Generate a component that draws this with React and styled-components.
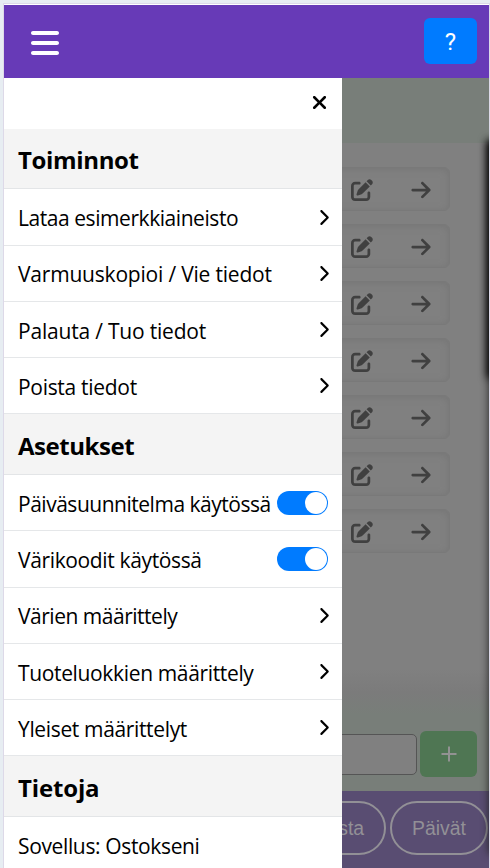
import React from "react";
import styled, { createGlobalStyle } from "styled-components";
import { FaBars, FaXmark, FaChevronRight, FaPenToSquare, FaArrowRight } from "react-icons/fa6";

const GlobalStyle = createGlobalStyle`
  * { box-sizing: border-box; }
  body { margin: 0; background: #e7edf2; overflow: hidden; }
  button { font: inherit; padding: 0; margin: 0; }
`;

const Page = styled.div`
  height: 868px;
  width: 490px;
  padding: 3px 0 0 3px;
  background: #e7edf2;
  overflow: hidden;
`;

const Frame = styled.div`
  display: flex;
  flex-direction: column;
  height: 865px;
  border: solid #ddd9e8;
  border-width: 1px 1px 0 1px;
  padding-top: 1px;
  background: #fff;
  font-family: "Open Sans", "Noto Sans", sans-serif;
`;

const Header = styled.header`
  flex: none;
  height: 73px;
  padding: 0 12px 1px 25px;
  display: flex;
  align-items: center;
  justify-content: space-between;
  background: #673ab7;
`;

const IconButton = styled.button`
  display: flex;
  border: 0;
  background: none;
  color: ${(p) => p.$color || "#000"};
  font-size: ${(p) => p.$size}px;
`;

const MenuButton = styled(IconButton)`
  padding-top: 3px;
`;

const HelpButton = styled.button`
  width: 53px;
  height: 46px;
  padding-top: 2px;
  border: 0;
  border-radius: 6px;
  background: #007bff;
  color: #fff;
  && { font-family: Roboto, sans-serif; font-size: 24px; }
`;

const Body = styled.div`
  position: relative;
  flex: 1;
  min-height: 0;
  display: flex;
  flex-direction: column;
  background: #808080;
  overflow: hidden;
`;

const Banner = styled.div`
  flex: none;
  height: 65px;
  background: #787e79;
`;

const List = styled.div`
  flex: 1;
  display: flex;
  flex-direction: column;
  gap: 13px;
  padding: 24px 39px 0 16px;
  background: linear-gradient(#808080 92%, #7b7b7b 96%, #787e79 100%);
`;

const Item = styled.div`
  height: 44px;
  display: flex;
  align-items: center;
  justify-content: flex-end;
  gap: 37px;
  padding: 2px 17px 0 0;
  border: 1px solid #797979;
  border-radius: 6px;
  box-shadow: inset 0 1px 7px #757575;
  color: #404040;
  font-size: 22px;
`;

const AddForm = styled.div`
  flex: none;
  height: 76px;
  display: flex;
  align-items: center;
  gap: 3px;
  padding: 2px 12px 0 16px;
  background: #787e79;
`;

const Field = styled.div`
  flex: 1;
  height: 41px;
  border: 1px solid #555;
  border-radius: 5px;
  background: #808080;
`;

const AddButton = styled.button`
  width: 57px;
  height: 46px;
  display: flex;
  align-items: center;
  justify-content: center;
  border: 0;
  border-radius: 6px;
  background: #4f7653;
`;

const Tabs = styled.nav`
  flex: none;
  height: 77px;
  display: flex;
  justify-content: flex-end;
  gap: 4px;
  padding: 10px 1px 0 0;
  background: #594d72;
`;

const Tab = styled.button`
  height: 54px;
  padding: 0 20px;
  border: 2px solid #929096;
  border-radius: 27px;
  background: none;
  color: #929096;
  && { font-family: "Liberation Sans", Arial, sans-serif; font-size: 19.4px; }
`;

const EdgeShadow = styled.div`
  position: absolute;
  right: -12px;
  top: 64px;
  width: 12px;
  height: ${(p) => p.$height}px;
  box-shadow: 0 0 8px ${(p) => p.$spread || 0}px ${(p) => p.$color};
`;

const Drawer = styled.aside`
  position: absolute;
  left: 0;
  top: 0;
  bottom: 0;
  width: 338px;
  background: #fff;
  color: #000;
  overflow: hidden;
`;

const CloseRow = styled.div`
  height: 50.6px;
  display: flex;
  align-items: center;
  justify-content: flex-end;
  padding: 0 12px 2.4px 0;
`;

const Heading = styled.h2`
  margin: 0;
  height: 60.8px;
  padding: 2px 14px 0;
  display: flex;
  align-items: center;
  border-bottom: 1px solid #e3e5e7;
  background: #f4f4f4;
  font-size: 24px;
  font-weight: 700;
  letter-spacing: ${(p) => p.$tracking || 0}px;
`;

const Row = styled.div`
  height: 56.25px;
  padding: 0 14px;
  display: flex;
  align-items: center;
  justify-content: space-between;
  border-bottom: 1px solid #e5e7e9;
`;

const Chevron = styled(FaChevronRight)`
  flex: none;
  margin-right: -4px;
  font-size: 17px;
`;

const Label = styled.span`
  padding-top: 2px;
  white-space: nowrap;
  font-size: 21px;
  letter-spacing: ${(p) => p.$tracking || 0}px;
`;

const Switch = styled.span`
  flex: none;
  width: 51px;
  height: 24px;
  padding: 1px;
  display: flex;
  justify-content: flex-end;
  border-radius: 12px;
  background: #007bff;

  &::after {
    content: "";
    width: 22px;
    height: 22px;
    border-radius: 50%;
    background: #fff;
  }
`;

const sections = [
  {
    title: "Toiminnot",
    tracking: -0.35,
    rows: [
      { label: "Lataa esimerkkiaineisto", tracking: -0.44 },
      { label: "Varmuuskopioi / Vie tiedot", tracking: -0.2 },
      { label: "Palauta / Tuo tiedot", tracking: -0.2 },
      { label: "Poista tiedot", tracking: -0.3 },
    ],
  },
  {
    title: "Asetukset",
    tracking: -0.45,
    rows: [
      { label: "Päiväsuunnitelma käytössä", toggle: true, tracking: -0.48 },
      { label: "Värikoodit käytössä", toggle: true, tracking: -0.36 },
      { label: "Värien määrittely", tracking: -0.48 },
      { label: "Tuoteluokkien määrittely", tracking: -0.35 },
      { label: "Yleiset määrittelyt", tracking: -0.35 },
    ],
  },
  {
    title: "Tietoja",
    tracking: -0.15,
    rows: [{ label: "Sovellus: Ostokseni", plain: true, tracking: -0.36 }],
  },
];

export default function App() {
  return (
    <Page>
      <GlobalStyle />
      <Frame>
        <Header>
          <MenuButton $size={32} $color="#fff" aria-label="Valikko"><FaBars /></MenuButton>
          <HelpButton>?</HelpButton>
        </Header>
        <Body>
          <Banner />
          <List>
            {Array.from({ length: 7 }, (_, i) => (
              <Item key={i}>
                <FaPenToSquare />
                <FaArrowRight />
              </Item>
            ))}
          </List>
          <AddForm>
            <Field />
            <AddButton aria-label="Lisää">
              <svg width="16" height="16" viewBox="0 0 16 16" fill="none" stroke="#929292" strokeWidth="2">
                <path d="M8 0.5v15M0.5 8h15" />
              </svg>
            </AddButton>
          </AddForm>
          <Tabs>
            <Tab>Lista</Tab>
            <Tab>Päivät</Tab>
          </Tabs>
          <EdgeShadow $height={712} $color="#222" />
          <EdgeShadow $height={234} $color="#000" $spread={2} />
          <Drawer>
            <CloseRow>
              <IconButton $size={21} aria-label="Sulje"><FaXmark /></IconButton>
            </CloseRow>
            {sections.map((s) => (
              <React.Fragment key={s.title}>
                <Heading $tracking={s.tracking}>{s.title}</Heading>
                {s.rows.map((r) => (
                  <Row key={r.label}>
                    <Label $tracking={r.tracking}>{r.label}</Label>
                    {r.toggle ? <Switch /> : r.plain ? null : <Chevron />}
                  </Row>
                ))}
              </React.Fragment>
            ))}
          </Drawer>
        </Body>
      </Frame>
    </Page>
  );
}
